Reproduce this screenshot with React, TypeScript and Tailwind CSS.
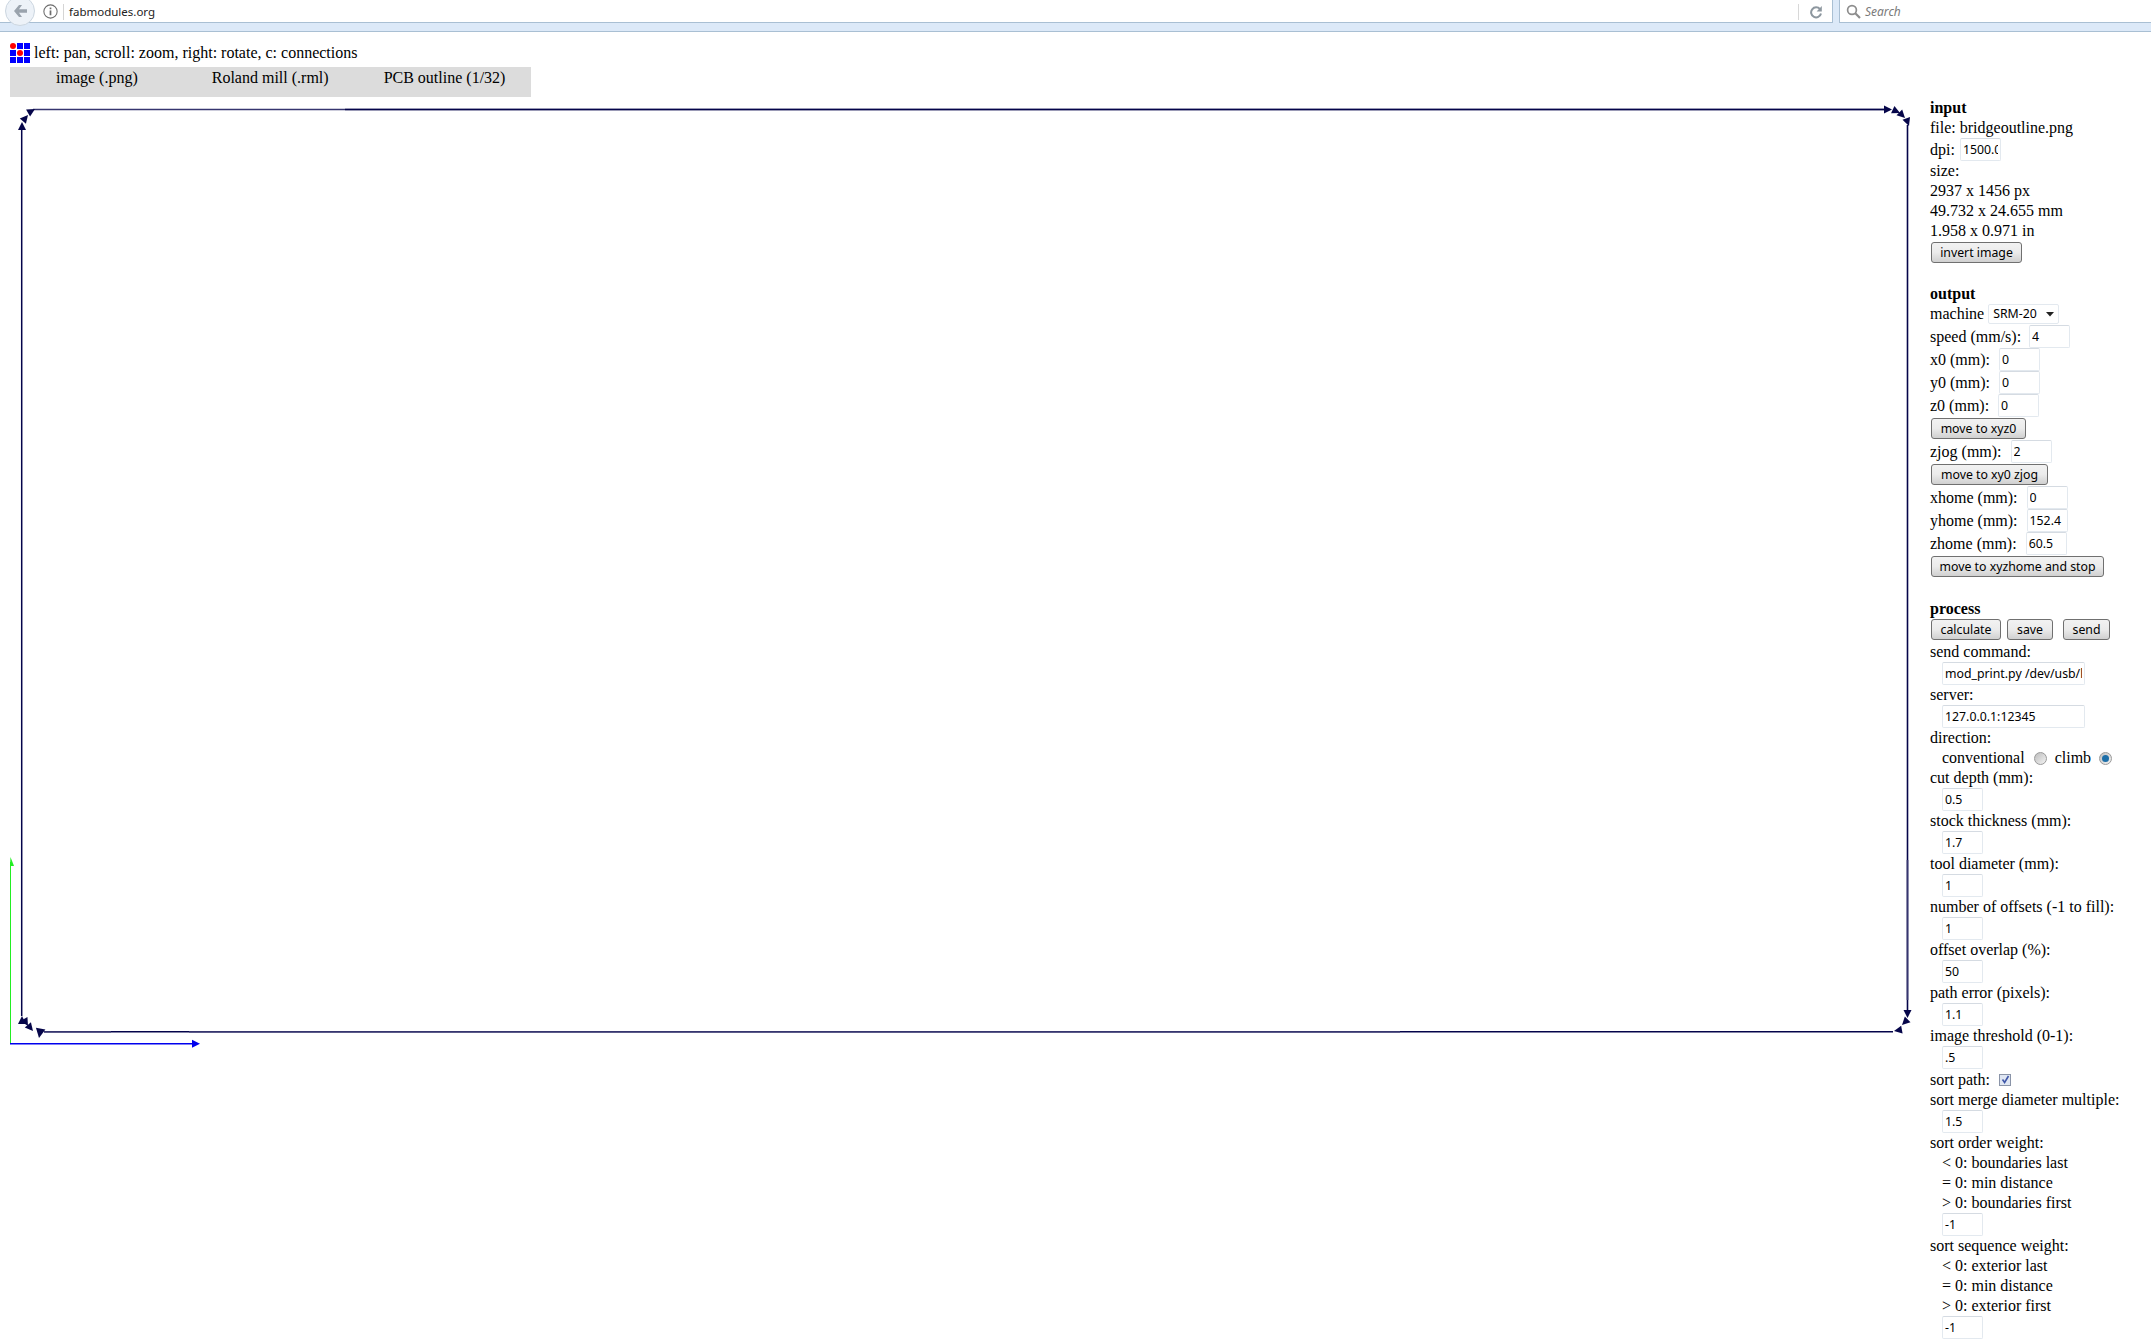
import React from "react";

const uiFont = "font-['Noto_Sans',sans-serif] text-[12.3px]";

function Field({ value, className = "w-[41px]" }: { value: string; className?: string }) {
  return (
    <input
      readOnly
      value={value}
      className={`${uiFont} block h-[23px] ${className} rounded-[2px] border border-[#e3e9ef] border-t-[#d5dbe2] bg-white px-[2px] text-black outline-none`}
    />
  );
}

function Btn({ label, className = "" }: { label: string; className?: string }) {
  return (
    <button
      className={`${uiFont} flex h-[21px] items-center justify-center rounded-[3px] border border-[#707070] bg-gradient-to-b from-[#f2f2f2] via-[#ebebeb] to-[#d0d0d0] pt-px text-black ${className}`}
    >
      {label}
    </button>
  );
}

function Line({ children, className = "" }: { children: React.ReactNode; className?: string }) {
  return <div className={`h-5 whitespace-nowrap leading-5 ${className}`}>{children}</div>;
}

function InputRow({ label, value, gap }: { label: string; value: string; gap: string }) {
  return (
    <div className="flex h-[23px] items-center whitespace-nowrap leading-5">
      <span className={gap}>{label}</span>
      <Field value={value} />
    </div>
  );
}

function LabelledField({ label, value, wide }: { label: string; value: string; wide?: boolean }) {
  return (
    <>
      <Line>{label}</Line>
      <div className="pl-3">
        <Field value={value} className={wide ? "w-[143px]" : "w-[41px]"} />
      </div>
    </>
  );
}

function Radio({ on }: { on?: boolean }) {
  return (
    <span className="flex h-[13px] w-[13px] items-center justify-center rounded-full border border-[#9a9a9a] bg-gradient-to-br from-[#bdbdbd] to-[#f4f4f4]">
      {on && <span className="h-[7px] w-[7px] rounded-full bg-[#1c6ea8]" />}
    </span>
  );
}

function Arrow({ x, y, a, fill = "#06064a", s = 1 }: { x: number; y: number; a: number; fill?: string; s?: number }) {
  return <polygon points="0,0 -8,-4 -8,4" fill={fill} transform={`translate(${x} ${y}) rotate(${a}) scale(${s})`} />;
}

function Canvas() {
  const dark = "#04044a";
  const soft = "#36356f";
  return (
    <svg viewBox="0 100 1925 960" className="mt-[3px] block h-[960px] w-[1925px]">
      {/* axes */}
      <line x1="10.5" y1="862" x2="10.5" y2="1044" stroke="#22ee22" strokeWidth="1" />
      <polygon points="10.5,857 10,866 14,866" fill="#22ee22" />
      <line x1="10" y1="1043.8" x2="194" y2="1043.8" stroke="#0000ee" strokeWidth="1.6" />
      <Arrow x={200} y={1043.8} a={0} fill="#0000ee" />
      {/* toolpath */}
      <line x1="33" y1="109.5" x2="1890" y2="109.5" stroke={soft} strokeWidth="1.6" />
      <line x1="345" y1="109.5" x2="1885" y2="109.5" stroke={dark} strokeWidth="1.6" />
      <line x1="1907.5" y1="125" x2="1907.5" y2="1015" stroke={dark} strokeWidth="1.6" />
      <line x1="1907.5" y1="860" x2="1907.5" y2="1000" stroke={soft} strokeWidth="1.6" />
      <line x1="44" y1="1031.8" x2="1893" y2="1031.8" stroke={dark} strokeWidth="1.6" />
      <line x1="44" y1="1031.8" x2="111" y2="1031.8" stroke={soft} strokeWidth="1.6" />
      <line x1="189" y1="1031.8" x2="1400" y2="1031.8" stroke={soft} strokeWidth="1.6" />
      <line x1="21.7" y1="129" x2="21.7" y2="1016" stroke={dark} strokeWidth="1.5" />
      <Arrow x={22} y={122} a={-90} />
      <Arrow x={28} y={115} a={-50} />
      <Arrow x={35} y={109} a={-30} />
      <Arrow x={1892} y={109.5} a={0} />
      <Arrow x={1900} y={113} a={25} />
      <Arrow x={1905} y={118} a={45} />
      <Arrow x={1909} y={126} a={70} />
      <Arrow x={1907.5} y={1018} a={90} />
      <Arrow x={1902} y={1025} a={135} />
      <Arrow x={1894} y={1031} a={170} />
      <Arrow x={39} y={1038} a={100} s={1.2} />
      <Arrow x={33} y={1031} a={50} />
      <Arrow x={28} y={1026} a={60} />
      <Arrow x={22} y={1016} a={-90} />
    </svg>
  );
}

function BrowserBar() {
  return (
    <div className="h-8 border-b border-[#a9bfd3] bg-[#dce9f8]">
      <div className="flex h-[23px]">
        <div className="relative flex flex-1 items-center border-b border-r border-[#a9bfd3] bg-white pl-[43px] pt-px font-['Noto_Sans',sans-serif] text-[11.5px] text-[#222]">
          <div className="absolute -top-[4px] left-[5px] flex h-[30px] w-[30px] items-center justify-center rounded-full border border-[#ccd6e0] bg-[#edf2f8]">
            <svg width="16" height="14" viewBox="0 0 16 14">
              <path d="M7 1 2 7l5 6h3L7 8.7h8V5.3H7L10 1z" fill="#9aa3ad" />
            </svg>
          </div>
          <svg width="15" height="15" viewBox="0 0 14 14" className="shrink-0">
            <circle cx="7" cy="7" r="6.2" fill="none" stroke="#6d6d6d" strokeWidth="1" />
            <rect x="6.2" y="6" width="1.6" height="4.5" fill="#6d6d6d" />
            <rect x="6.2" y="3.3" width="1.6" height="1.6" fill="#6d6d6d" />
          </svg>
          <div className="ml-[5px] h-[16px] w-px bg-[#d5d5d5]" />
          <span className="ml-[5px]">fabmodules.org</span>
          <div className="ml-auto mr-[33px] h-[16px] w-px bg-[#d8d8d8]" />
          <svg width="14" height="14" viewBox="0 0 14 14" className="absolute right-[9px] top-[5px]">
            <path d="M11 4.2A5 5 0 1 0 12 8.5" fill="none" stroke="#8d979f" strokeWidth="2" />
            <polygon points="12.8,1 12.8,6.4 7.6,6.4" fill="#8d979f" />
          </svg>
        </div>
        <div className="ml-[6px] flex w-[312px] items-center border-b border-l border-[#a9bfd3] bg-white pl-[6px] pt-px font-['Noto_Sans',sans-serif] text-[12px] italic text-[#7a7a7a]">
          <svg width="15" height="15" viewBox="0 0 15 15">
            <circle cx="6" cy="6" r="4.4" fill="none" stroke="#8d8d8d" strokeWidth="1.7" />
            <line x1="9.3" y1="9.3" x2="14" y2="14" stroke="#8d8d8d" strokeWidth="2.2" />
          </svg>
          <span className="ml-[4px]">Search</span>
        </div>
      </div>
    </div>
  );
}

function Logo() {
  const cells = [1, 0, 0, 0, 1, 0, 0, 0, 0];
  return (
    <div className="grid h-5 w-5 grid-cols-3 grid-rows-3 gap-[1.5px]">
      {cells.map((red, i) => (
        <span key={i} className={red ? "m-auto h-[6px] w-[6px] rounded-full bg-[#ff0000]" : "bg-[#0000ff]"} />
      ))}
    </div>
  );
}

function Sidebar() {
  return (
    <aside className="w-[221px] shrink-0 pt-[66px]">
      <Line className="font-bold">input</Line>
      <Line>file: bridgeoutline.png</Line>
      <InputRow label="dpi:" value="1500.0" gap="mr-[5px]" />
      <Line>size:</Line>
      <Line>2937 x 1456 px</Line>
      <Line>49.732 x 24.655 mm</Line>
      <Line>1.958 x 0.971 in</Line>
      <Btn label="invert image" className="ml-px mt-px w-[91px]" />

      <Line className="mt-[21px] font-bold">output</Line>
      <div className="flex h-[20px] items-center whitespace-nowrap leading-5">
        <span className="mr-1">machine</span>
        <div className={`${uiFont} flex h-[20px] w-[71px] items-center rounded-[2px] border border-[#e3e9ef] bg-white pl-[4px] text-black`}>
          SRM-20
          <svg width="8" height="5" viewBox="0 0 8 5" className="ml-auto mr-[4px]">
            <polygon points="0,0 8,0 4,4.5" fill="#222" />
          </svg>
        </div>
      </div>
      <div className="h-px" />
      <InputRow label="speed (mm/s):" value="4" gap="mr-[8px]" />
      <InputRow label="x0 (mm):" value="0" gap="mr-[9px]" />
      <InputRow label="y0 (mm):" value="0" gap="mr-[9px]" />
      <InputRow label="z0 (mm):" value="0" gap="mr-[9px]" />
      <Btn label="move to xyz0" className="ml-px mt-px w-[95px]" />
      <div className="h-px" />
      <InputRow label="zjog (mm):" value="2" gap="mr-[9px]" />
      <Btn label="move to xy0 zjog" className="ml-px mt-px w-[117px]" />
      <div className="h-px" />
      <InputRow label="xhome (mm):" value="0" gap="mr-[9px]" />
      <InputRow label="yhome (mm):" value="152.4" gap="mr-[9px]" />
      <InputRow label="zhome (mm):" value="60.5" gap="mr-[9px]" />
      <Btn label="move to xyzhome and stop" className="ml-px mt-px w-[173px]" />

      <Line className="mt-[22px] font-bold">process</Line>
      <div className="ml-px flex">
        <Btn label="calculate" className="w-[70px]" />
        <Btn label="save" className="ml-[6px] w-[46px]" />
        <Btn label="send" className="ml-[10px] w-[47px]" />
      </div>
      <div className="h-[2px]" />
      <LabelledField label="send command:" value="mod_print.py /dev/usb/lp0" wide />
      <LabelledField label="server:" value="127.0.0.1:12345" wide />
      <Line>direction:</Line>
      <Line className="flex items-center pl-3">
        <span className="mr-[9px]">conventional</span>
        <Radio />
        <span className="ml-[8px] mr-[8px]">climb</span>
        <Radio on />
      </Line>
      <LabelledField label="cut depth (mm):" value="0.5" />
      <LabelledField label="stock thickness (mm):" value="1.7" />
      <LabelledField label="tool diameter (mm):" value="1" />
      <LabelledField label="number of offsets (-1 to fill):" value="1" />
      <LabelledField label="offset overlap (%):" value="50" />
      <LabelledField label="path error (pixels):" value="1.1" />
      <LabelledField label="image threshold (0-1):" value=".5" />
      <div className="flex h-[21px] items-center whitespace-nowrap leading-5">
        <span className="mr-[9px]">sort path:</span>
        <span className="flex h-3 w-3 items-center justify-center border border-[#8a94a8] bg-[#dfe6f2]">
          <svg width="9" height="9" viewBox="0 0 9 9">
            <path d="M1.5 4.5 3.6 7.5 7.5 1" fill="none" stroke="#3f57a8" strokeWidth="1.6" />
          </svg>
        </span>
      </div>
      <LabelledField label="sort merge diameter multiple:" value="1.5" />
      <Line>sort order weight:</Line>
      <Line className="pl-3">&lt; 0: boundaries last</Line>
      <Line className="pl-3">= 0: min distance</Line>
      <Line className="pl-3">&gt; 0: boundaries first</Line>
      <div className="pl-3">
        <Field value="-1" />
      </div>
      <Line>sort sequence weight:</Line>
      <Line className="pl-3">&lt; 0: exterior last</Line>
      <Line className="pl-3">= 0: min distance</Line>
      <Line className="pl-3">&gt; 0: exterior first</Line>
      <div className="pl-3">
        <Field value="-1" />
      </div>
    </aside>
  );
}

export default function App() {
  return (
    <div className="h-[1344px] overflow-hidden bg-white font-['Liberation_Serif',serif] text-[16px] text-black">
      <BrowserBar />
      <div className="flex">
        <main className="w-[1930px] shrink-0">
          <div className="ml-[10px] mt-[11px] flex h-5 items-center whitespace-nowrap leading-5">
            <Logo />
            <span className="ml-[4px]">left: pan, scroll: zoom, right: rotate, c: connections</span>
          </div>
          <div className="ml-[10px] mt-[4px] flex h-[30px] w-[521px] whitespace-nowrap bg-[#dcdcdc] pl-[46px] pt-px leading-5">
            <span>image (.png)</span>
            <span className="ml-[74px]">Roland mill (.rml)</span>
            <span className="ml-[55px]">PCB outline (1/32)</span>
          </div>
          <Canvas />
        </main>
        <Sidebar />
      </div>
    </div>
  );
}
